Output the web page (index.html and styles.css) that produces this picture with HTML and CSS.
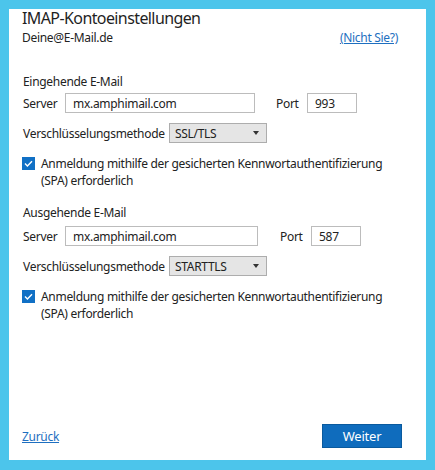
FILE: index.html
```html
<!DOCTYPE html>
<html lang="de">
<head>
    <meta charset="UTF-8">
    <meta name="viewport" content="width=device-width, initial-scale=1.0">
    <title>IMAP-Kontoeinstellungen</title>
    <link rel="stylesheet" href="styles.css">
</head>
<body>
    <div class="dialog">
        <h1 class="title">IMAP-Kontoeinstellungen</h1>
        <div class="account-row">
            <span>Deine@E-Mail.de</span>
            <a href="#" class="link not-you">(Nicht Sie?)</a>
        </div>

        <!-- Incoming -->
        <div class="section-title first">Eingehende E-Mail</div>
        <div class="field-row">
            <label class="label server-label">Server</label>
            <input type="text" class="text-input server-input" value="mx.amphimail.com">
            <label class="label port-label">Port</label>
            <input type="text" class="text-input port-input" value="993">
        </div>
        <div class="field-row select-row">
            <label class="label method-label">Verschlüsselungsmethode</label>
            <div class="select-box">
                <span>SSL/TLS</span>
                <span class="arrow"></span>
            </div>
        </div>
        <div class="check-row">
            <span class="checkbox">
                <svg width="9" height="7" viewBox="0 0 9 7"><path d="M1 3.6 L3.4 6 L8 1.2" fill="none" stroke="#fff" stroke-width="1.4"/></svg>
            </span>
            <span class="check-text">Anmeldung mithilfe der gesicherten Kennwortauthentifizierung (SPA) erforderlich</span>
        </div>

        <!-- Outgoing -->
        <div class="section-title second">Ausgehende E-Mail</div>
        <div class="field-row out">
            <label class="label server-label">Server</label>
            <input type="text" class="text-input server-input wide" value="mx.amphimail.com">
            <label class="label port-label">Port</label>
            <input type="text" class="text-input port-input" value="587">
        </div>
        <div class="field-row select-row">
            <label class="label method-label">Verschlüsselungsmethode</label>
            <div class="select-box">
                <span>STARTTLS</span>
                <span class="arrow"></span>
            </div>
        </div>
        <div class="check-row">
            <span class="checkbox">
                <svg width="9" height="7" viewBox="0 0 9 7"><path d="M1 3.6 L3.4 6 L8 1.2" fill="none" stroke="#fff" stroke-width="1.4"/></svg>
            </span>
            <span class="check-text">Anmeldung mithilfe der gesicherten Kennwortauthentifizierung (SPA) erforderlich</span>
        </div>

        <div class="footer">
            <a href="#" class="link back">Zurück</a>
            <button class="next-button">Weiter</button>
        </div>
    </div>
</body>
</html>
```

FILE: styles.css
```css
body {
    margin: 0;
    padding: 9px 9px 10px 9px;
    background-color: #4cc5eb;
    font-family: 'Noto Sans', 'Open Sans', sans-serif;
    font-size: 12px;
    letter-spacing: -0.3px;
    color: #222;
}

.dialog {
    background-color: white;
    height: 451px;
    padding: 0 24px 0 13px;
    display: flex;
    flex-direction: column;
    box-sizing: border-box;
}

.title {
    margin: 0;
    height: 18px;
    line-height: 18px;
    font-size: 16px;
    letter-spacing: -0.6px;
    font-weight: normal;
    color: #1f1f1f;
}

.account-row {
    display: flex;
    justify-content: space-between;
    align-items: center;
    height: 16px;
    margin-top: 3px;
    line-height: 16px;
}

.link {
    color: #1e6fc0;
    text-decoration: underline;
}

.not-you {
    margin-right: 4px;
}

.section-title {
    height: 16px;
    line-height: 16px;
    margin-left: 1px;
}

.section-title.first {
    margin-top: 28px;
}

.section-title.second {
    margin-top: 16px;
}

.field-row {
    display: flex;
    align-items: center;
    height: 20px;
    margin-top: 3px;
}

.field-row.out {
    margin-top: 5px;
}

.label {
    margin-left: 1px;
}

.server-label {
    width: 42px;
}

.text-input {
    box-sizing: border-box;
    height: 20px;
    border: 1px solid #bcbcbc;
    padding: 0 0 0 7px;
    font-family: inherit;
    font-size: 12px;
    letter-spacing: -0.3px;
    color: #222;
    outline: none;
}

.server-input {
    width: 190px;
}

.server-input.wide {
    width: 193px;
}

.port-label {
    margin-left: 21px;
    width: 31px;
}

.out .port-label {
    margin-left: 22px;
}

.port-input {
    width: 50px;
}

.select-row {
    margin-top: 10px;
}

.method-label {
    width: 146px;
}

.select-box {
    box-sizing: border-box;
    width: 98px;
    height: 20px;
    background-color: #e5e5e5;
    border: 1px solid #adadad;
    display: flex;
    align-items: center;
    justify-content: space-between;
    padding: 0 7px 0 5px;
}

.arrow {
    width: 0;
    height: 0;
    border-left: 3.5px solid transparent;
    border-right: 3.5px solid transparent;
    border-top: 4px solid #333;
}

.check-row {
    display: flex;
    align-items: flex-start;
    margin-top: 12px;
}

.checkbox {
    width: 13px;
    height: 13px;
    margin-top: 2px;
    background-color: #1170c5;
    display: flex;
    align-items: center;
    justify-content: center;
    flex-shrink: 0;
}

.check-text {
    margin-left: 6px;
    line-height: 17px;
    width: 345px;
}

.footer {
    margin-top: auto;
    margin-bottom: 12px;
    display: flex;
    justify-content: space-between;
    align-items: center;
}

.next-button {
    width: 80px;
    height: 24px;
    background-color: #0f6cbd;
    border: 1px solid #0a5a9e;
    color: white;
    font-family: inherit;
    font-size: 13px;
    letter-spacing: -0.2px;
    cursor: pointer;
}
```
